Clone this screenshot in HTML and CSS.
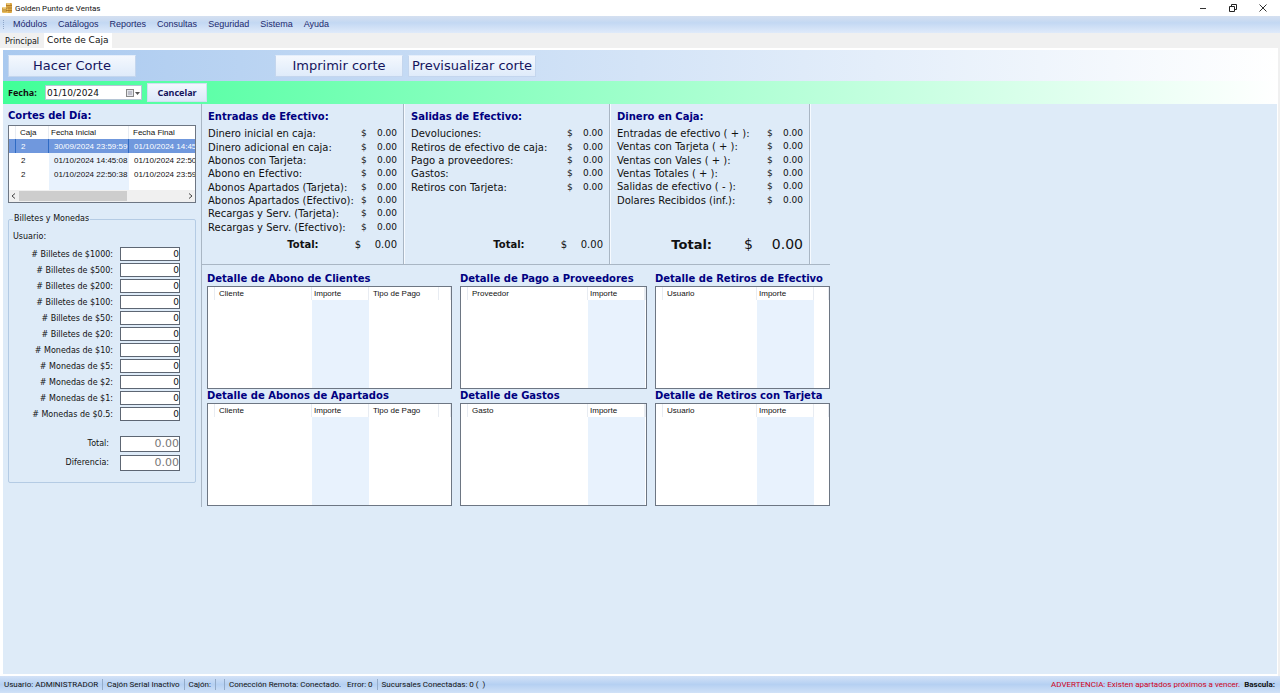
FILE: index.html
```html
<!DOCTYPE html>
<html lang="es">
<head>
  <meta charset="UTF-8" />
  <meta name="viewport" content="width=device-width, initial-scale=1.0" />
  <title>Golden Punto de Ventas</title>
  <link rel="stylesheet" href="styles.css">
</head>
<body>

  <header class="titlebar">
    <svg class="app-icon" viewBox="0 0 12 12" width="12" height="12">
      <rect x="5" y="1" width="6" height="10" rx="1" fill="#d9a441"/>
      <rect x="1" y="5" width="6" height="6" rx="1" fill="#e9bd5c"/>
      <path d="M5 3.5h6M5 6h6M5 8.500h6M1 7h5M1 9h5" stroke="#a5701e" stroke-width=".7"/>
      <path d="M6 2h3M2 6h3" stroke="#fff3c8" stroke-width=".8"/>
    </svg>
    <span class="title">Golden Punto de Ventas</span>
    <div class="window-buttons">
      <button type="button" aria-label="Minimizar">
        <svg viewBox="0 0 10 10" width="10" height="10"><path d="M2 5.500h6" stroke="#333" fill="none"/></svg>
      </button>
      <button type="button" aria-label="Restaurar">
        <svg viewBox="0 0 10 10" width="10" height="10"><path d="M1.500 3.500h5v5h-5zM3.500 3.500v-2h5v5h-2" stroke="#222" fill="none"/></svg>
      </button>
      <button type="button" aria-label="Cerrar">
        <svg viewBox="0 0 10 10" width="10" height="10"><path d="M1.500 1.500l7 7M8.500 1.500l-7 7" stroke="#333" fill="none"/></svg>
      </button>
    </div>
  </header>

  <nav class="menu">
    <a href="#">Módulos</a>
    <a href="#">Catálogos</a>
    <a href="#">Reportes</a>
    <a href="#">Consultas</a>
    <a href="#">Seguridad</a>
    <a href="#">Sistema</a>
    <a href="#">Ayuda</a>
  </nav>

  <div class="tabs">
    <button type="button" class="tab">Principal</button>
    <button type="button" class="tab active">Corte de Caja</button>
  </div>

  <main class="panel">
    <div class="toolbar">
      <button type="button" class="btn-large first">Hacer Corte</button>
      <button type="button" class="btn-large">Imprimir corte</button>
      <button type="button" class="btn-large">Previsualizar corte</button>
    </div>

    <div class="datebar">
      <label for="fecha">Fecha:</label>
      <div class="date-field">
        <input type="text" id="fecha" value="01/10/2024">
        <button type="button" aria-label="Abrir calendario">
          <svg viewBox="0 0 16 10" width="16" height="10">
            <rect x="1.500" y="1.500" width="7" height="7" fill="#e4e6ea" stroke="#888"/>
            <path d="M3 4h4M3 6h4" stroke="#99a"/>
            <path d="M10 4h5l-2.500 3z" fill="#555"/>
          </svg>
        </button>
      </div>
      <button type="button" class="btn-cancel">Cancelar</button>
    </div>

    <div class="content">
      <aside class="side">
        <h2>Cortes del Día:</h2>
        <div class="cuts">
          <div class="cuts-view">
            <table class="grid cuts-table">
              <colgroup><col class="c-mark"><col class="c-caja"><col class="c-fecha"><col class="c-fecha"></colgroup>
              <thead>
                <tr><th></th><th>Caja</th><th>Fecha Inicial</th><th>Fecha Final</th></tr>
              </thead>
              <tbody>
                <tr class="selected"><td></td><td>2</td><td>30/09/2024 23:59:59</td><td>01/10/2024 14:45</td></tr>
                <tr><td></td><td>2</td><td>01/10/2024 14:45:08</td><td>01/10/2024 22:50</td></tr>
                <tr><td></td><td>2</td><td>01/10/2024 22:50:38</td><td>01/10/2024 23:59</td></tr>
                <tr><td></td><td></td><td></td><td></td></tr>
              </tbody>
            </table>
          </div>
          <div class="scrollbar">
            <svg viewBox="0 0 10 10" width="10" height="10"><path d="M6 2.500l-3 2.500l3 2.500" stroke="#444" fill="none"/></svg>
            <div class="track"><div class="thumb"></div></div>
            <svg viewBox="0 0 10 10" width="10" height="10"><path d="M4 2.500l3 2.500l-3 2.500" stroke="#444" fill="none"/></svg>
          </div>
        </div>

        <fieldset class="money">
          <legend>Billetes y Monedas</legend>
          <p>Usuario:</p>
          <div class="field"><label for="b1000"># Billetes de $1000:</label><input type="text" id="b1000" value="0"></div>
          <div class="field"><label for="b500"># Billetes de $500:</label><input type="text" id="b500" value="0"></div>
          <div class="field"><label for="b200"># Billetes de $200:</label><input type="text" id="b200" value="0"></div>
          <div class="field"><label for="b100"># Billetes de $100:</label><input type="text" id="b100" value="0"></div>
          <div class="field"><label for="b50"># Billetes de $50:</label><input type="text" id="b50" value="0"></div>
          <div class="field"><label for="b20"># Billetes de $20:</label><input type="text" id="b20" value="0"></div>
          <div class="field"><label for="m10"># Monedas de $10:</label><input type="text" id="m10" value="0"></div>
          <div class="field"><label for="m5"># Monedas de $5:</label><input type="text" id="m5" value="0"></div>
          <div class="field"><label for="m2"># Monedas de $2:</label><input type="text" id="m2" value="0"></div>
          <div class="field"><label for="m1"># Monedas de $1:</label><input type="text" id="m1" value="0"></div>
          <div class="field"><label for="m05"># Monedas de $0.5:</label><input type="text" id="m05" value="0"></div>
          <div class="sums">
            <div class="field"><label for="total">Total:</label><input type="text" id="total" value="0.00" readonly></div>
            <div class="field"><label for="dif">Diferencia:</label><input type="text" id="dif" value="0.00" readonly></div>
          </div>
        </fieldset>
      </aside>

      <div class="detail">
        <div class="summary">
          <section class="sum">
            <h2>Entradas de Efectivo:</h2>
            <div class="rows">
              <table>
                <tr><th>Dinero inicial en caja:</th><td>$</td><td>0.00</td></tr>
                <tr><th>Dinero adicional en caja:</th><td>$</td><td>0.00</td></tr>
                <tr><th>Abonos con Tarjeta:</th><td>$</td><td>0.00</td></tr>
                <tr><th>Abono en Efectivo:</th><td>$</td><td>0.00</td></tr>
                <tr><th>Abonos Apartados (Tarjeta):</th><td>$</td><td>0.00</td></tr>
                <tr><th>Abonos Apartados (Efectivo):</th><td>$</td><td>0.00</td></tr>
                <tr><th>Recargas y Serv. (Tarjeta):</th><td>$</td><td>0.00</td></tr>
                <tr><th>Recargas y Serv. (Efectivo):</th><td>$</td><td>0.00</td></tr>
              </table>
            </div>
            <div class="total"><b>Total:</b><span>$</span><span class="amount">0.00</span></div>
          </section>
          <section class="sum">
            <h2>Salidas de Efectivo:</h2>
            <div class="rows">
              <table class="rows-5">
                <tr><th>Devoluciones:</th><td>$</td><td>0.00</td></tr>
                <tr><th>Retiros de efectivo de caja:</th><td>$</td><td>0.00</td></tr>
                <tr><th>Pago a proveedores:</th><td>$</td><td>0.00</td></tr>
                <tr><th>Gastos:</th><td>$</td><td>0.00</td></tr>
                <tr><th>Retiros con Tarjeta:</th><td>$</td><td>0.00</td></tr>
              </table>
            </div>
            <div class="total"><b>Total:</b><span>$</span><span class="amount">0.00</span></div>
          </section>
          <section class="sum">
            <h2>Dinero en Caja:</h2>
            <div class="rows">
              <table class="rows-6">
                <tr><th>Entradas de efectivo ( + ):</th><td>$</td><td>0.00</td></tr>
                <tr><th>Ventas con Tarjeta ( + ):</th><td>$</td><td>0.00</td></tr>
                <tr><th>Ventas con Vales ( + ):</th><td>$</td><td>0.00</td></tr>
                <tr><th>Ventas Totales ( + ):</th><td>$</td><td>0.00</td></tr>
                <tr><th>Salidas de efectivo ( - ):</th><td>$</td><td>0.00</td></tr>
                <tr><th>Dolares Recibidos (inf.):</th><td>$</td><td>0.00</td></tr>
              </table>
            </div>
            <div class="total big"><b>Total:</b><span>$</span><span class="amount">0.00</span></div>
          </section>
        </div>

        <div class="lists">
          <section>
            <h2>Detalle de Abono de Clientes</h2>
            <table class="grid list">
              <colgroup><col class="c-mark"><col class="c-cliente"><col class="c-importe"><col class="c-tipo"><col></colgroup>
              <thead><tr><th></th><th>Cliente</th><th>Importe</th><th>Tipo de Pago</th><th></th></tr></thead>
              <tbody><tr><td></td><td></td><td></td><td></td><td></td></tr></tbody>
            </table>
          </section>
          <section>
            <h2>Detalle de Pago a Proveedores</h2>
            <table class="grid list">
              <colgroup><col class="c-mark"><col class="c-proveedor"><col class="c-importe"><col></colgroup>
              <thead><tr><th></th><th>Proveedor</th><th>Importe</th><th></th></tr></thead>
              <tbody><tr><td></td><td></td><td></td><td></td></tr></tbody>
            </table>
          </section>
          <section>
            <h2>Detalle de Retiros de Efectivo</h2>
            <table class="grid list">
              <colgroup><col class="c-mark"><col class="c-usuario"><col class="c-importe"><col></colgroup>
              <thead><tr><th></th><th>Usuario</th><th>Importe</th><th></th></tr></thead>
              <tbody><tr><td></td><td></td><td></td><td></td></tr></tbody>
            </table>
          </section>
          <section>
            <h2>Detalle de Abonos de Apartados</h2>
            <table class="grid list">
              <colgroup><col class="c-mark"><col class="c-cliente"><col class="c-importe"><col class="c-tipo"><col></colgroup>
              <thead><tr><th></th><th>Cliente</th><th>Importe</th><th>Tipo de Pago</th><th></th></tr></thead>
              <tbody><tr><td></td><td></td><td></td><td></td><td></td></tr></tbody>
            </table>
          </section>
          <section>
            <h2>Detalle de Gastos</h2>
            <table class="grid list">
              <colgroup><col class="c-mark"><col class="c-proveedor"><col class="c-importe"><col></colgroup>
              <thead><tr><th></th><th>Gasto</th><th>Importe</th><th></th></tr></thead>
              <tbody><tr><td></td><td></td><td></td><td></td></tr></tbody>
            </table>
          </section>
          <section>
            <h2>Detalle de Retiros con Tarjeta</h2>
            <table class="grid list">
              <colgroup><col class="c-mark"><col class="c-usuario"><col class="c-importe"><col></colgroup>
              <thead><tr><th></th><th>Usuario</th><th>Importe</th><th></th></tr></thead>
              <tbody><tr><td></td><td></td><td></td><td></td></tr></tbody>
            </table>
          </section>
        </div>
      </div>
    </div>
  </main>

  <footer class="statusbar">
    <span>Usuario: ADMINISTRADOR</span>
    <span>Cajón Serial Inactivo</span>
    <span>Cajón:</span>
    <span></span>
    <span>Conección Remota: Conectado. &nbsp; Error: 0</span>
    <span>Sucursales Conectadas: 0 ( &nbsp;)</span>
    <span class="warning">ADVERTENCIA: Existen apartados próximos a vencer.</span>
    <b>Bascula:</b>
  </footer>

</body>
</html>
```
FILE: styles.css
```css
* {
  box-sizing: border-box;
}
body {
  margin: 0;
  min-height: 100vh;
  display: flex;
  flex-direction: column;
  background: #f0f0f0;
  color: #111;
  font-family: "DejaVu Sans", Verdana, sans-serif;
  font-size: 10px;
  line-height: 13px;
}
button, input {
  font-family: inherit;
  color: inherit;
  margin: 0;
  padding: 0;
}
h2 {
  margin: 0;
  color: #000080;
  font-size: 10px;
  line-height: 14px;
  white-space: nowrap;
}

/* window frame */
.titlebar {
  display: flex;
  align-items: center;
  height: 16px;
  padding-left: 1px;
  background: #fff;
}
.title {
  margin-left: 2px;
  font: 8px Roboto, sans-serif;
}
.window-buttons {
  display: flex;
  gap: 20px;
  margin-left: auto;
  padding-right: 12px;
}
.window-buttons button {
  display: flex;
  border: 0;
  background: none;
}
.menu {
  display: flex;
  gap: 11px;
  height: 17px;
  padding-left: 8px;
  margin-bottom: 0;
  background: linear-gradient(#d5e0f0, #c3d8f3 40%, #dfeafa);
}
.menu::before {
  content: "";
  width: 1px;
  height: 9px;
  margin: 4px -8px 0 -5px;
  border-left: 1px dotted #8fa6c8;
}
.menu a {
  color: #1c2a6e;
  font: 9px/17px "Liberation Sans", Arial, sans-serif;
  text-decoration: none;
}
.menu a:first-of-type {
  margin-left: 5px;
}
.tabs {
  display: flex;
  align-items: flex-end;
  height: 15px;
  padding-left: 3px;
}
.tab {
  height: 13px;
  padding: 0 2px;
  border: 0;
  background: #f0f0f0;
  font-size: 8px;
}
.tab.active {
  height: 15px;
  margin-left: 3px;
  padding: 0 4px 2px 3px;
  background: #fff;
  font-size: 9px;
}

/* main panel */
.panel {
  flex: 1;
  display: flex;
  flex-direction: column;
  margin-right: 2px;
  border: solid #fff;
  border-width: 2px 1px 2px 3px;
  background: #deebf8;
}
.toolbar {
  display: flex;
  align-items: center;
  gap: 5px;
  height: 31px;
  padding-left: 5px;
  background: linear-gradient(90deg, #a9c9ef, #fff);
}
.btn-large {
  width: 128px;
  height: 22px;
  border: 1px solid #c4d6ee;
  border-top-color: #e4eefb;
  background: linear-gradient(#f4f8fe, #dfebfa);
  color: #14145c;
  font-size: 13px;
  white-space: nowrap;
}
.btn-large.first {
  margin-right: 134px;
}
.datebar {
  display: flex;
  align-items: center;
  height: 23px;
  padding-left: 5px;
  background: linear-gradient(90deg, #40ff98, #fff);
}
.datebar label {
  width: 37px;
  font: bold 9px "Noto Sans", sans-serif;
}
.date-field {
  display: flex;
  align-items: center;
  width: 97px;
  height: 15px;
  border: 1px solid #b5c6d6;
  background: #fff;
}
.date-field input {
  flex: 1;
  min-width: 0;
  border: 0;
  padding-left: 1px;
  background: none;
  font-size: 9px;
}
.date-field button {
  display: flex;
  border: 0;
  background: none;
}
.btn-cancel {
  width: 60px;
  height: 19px;
  margin-left: 5px;
  border: 1px solid #d0dff2;
  background: linear-gradient(#f2f7fe, #dde9f9);
  color: #14145c;
  font: bold 9px "Noto Sans", sans-serif;
}
.content {
  display: flex;
  align-items: flex-start;
}

/* left column */
.side {
  width: 198px;
  padding: 5px 5px 0;
}
.cuts {
  margin-top: 2px;
  border: 1px solid #6d7683;
  background: #fff;
}
.cuts-view {
  height: 64px;
  overflow: hidden;
}
.grid {
  table-layout: fixed;
  border-collapse: separate;
  border-spacing: 0;
  background: #fff;
  font: 8px/13px "Liberation Sans", Arial, sans-serif;
}
.grid th, .grid td {
  padding: 0 0 0 4px;
  font-weight: normal;
  text-align: left;
  white-space: nowrap;
}
.grid th {
  height: 13px;
  border-right: 1px solid #e8ecf2;
}
.grid th:nth-child(3) {
  padding-left: 2px;
}
.grid td {
  height: 14px;
}
.grid td:nth-child(3) {
  background: #e8f2fd;
}
.c-mark { width: 7px; }
.c-caja { width: 33px; }
.c-fecha { width: 80px; }
.c-cliente { width: 97px; }
.c-proveedor { width: 120px; }
.c-usuario { width: 94px; }
.c-importe { width: 57px; }
.c-tipo { width: 70px; }
.cuts-table {
  width: 200px;
}
.cuts-table td {
  padding-left: 5px;
}
.cuts-table .selected td {
  background: #7098dd;
  border-right: 1px solid #2f6bc4;
  color: #fff;
}
.scrollbar {
  display: flex;
  align-items: center;
  height: 12px;
  background: #f0f0f0;
}
.track {
  flex: 1;
  height: 10px;
}
.thumb {
  width: 65%;
  height: 100%;
  background: #cdcdcd;
}
.money {
  margin: 10px 0 0;
  padding: 0 15px 10px 4px;
  border: 1px solid #b4cbe4;
  border-radius: 2px;
  font-size: 8px;
}
.money legend {
  padding: 0 1px;
  line-height: 12px;
}
.money p {
  margin: 5px 0 3px;
}
.field {
  display: flex;
  align-items: center;
  justify-content: flex-end;
  gap: 7px;
  height: 16px;
}
.field input {
  width: 60px;
  height: 14px;
  border: 1px solid #5d6673;
  background: #fff;
  font-size: 9px;
  text-align: right;
}
.sums {
  margin-top: 12px;
}
.sums .field {
  height: 19px;
  gap: 11px;
}
.sums input {
  height: 16px;
  color: #777;
  font-size: 11px;
}

/* totals and detail lists */
.detail {
  border-left: 1px solid #a9b6c4;
  padding-bottom: 1px;
}
.summary {
  display: flex;
  border-bottom: 1px solid #a9b6c4;
}
.sum {
  width: 206px;
  height: 160px;
  padding: 6px 6px 0 7px;
  border-right: 1px solid #a9b6c4;
  box-shadow: 1px 0 #f6faff;
}
.sum:first-child {
  width: 202px;
  padding-left: 6px;
}
.sum:last-child {
  width: 200px;
}
.rows {
  height: 107px;
  margin: 3px 0 0;
}
.rows table {
  width: 100%;
  height: 107px;
  table-layout: fixed;
  border-collapse: collapse;
}
.rows .rows-5 {
  height: 67px;
}
.rows .rows-6 {
  height: 80px;
}
.rows th, .rows td {
  padding: 0;
  font-weight: normal;
  text-align: left;
  white-space: nowrap;
}
.rows td {
  width: 28px;
  font-size: 9px;
  text-align: right;
}
.rows td:nth-child(2) {
  width: 8px;
  text-align: left;
}
.total {
  display: flex;
  align-items: center;
  justify-content: flex-end;
  height: 20px;
}
.total b {
  margin-right: 36px;
}
.total .amount {
  width: 36px;
  text-align: right;
}
.total.big {
  font-size: 14px;
}
.total.big b {
  margin-right: 32px;
  font-size: 13px;
}
.total.big .amount {
  width: 50px;
}
.lists {
  display: grid;
  grid-template-columns: 245px 187px 175px;
  column-gap: 8px;
  padding: 7px 0 0 5px;
}
.list {
  width: 100%;
  height: 103px;
  border: 1px solid #6d7683;
}

/* status bar */
.statusbar {
  display: flex;
  align-items: center;
  height: 17px;
  padding: 0 5px 0 0;
  background: linear-gradient(#d3e2f7, #b5d0f2 50%, #d0e1f7);
  font: 8px Roboto, sans-serif;
  white-space: nowrap;
}
.statusbar span {
  padding: 0 4px;
  border-right: 1px solid #93abc9;
  line-height: 11px;
  min-height: 11px;
}
.statusbar span:nth-child(6), .statusbar .warning {
  border-right: 0;
}
.statusbar .warning {
  margin-left: auto;
  color: #d0021b;
}
```
